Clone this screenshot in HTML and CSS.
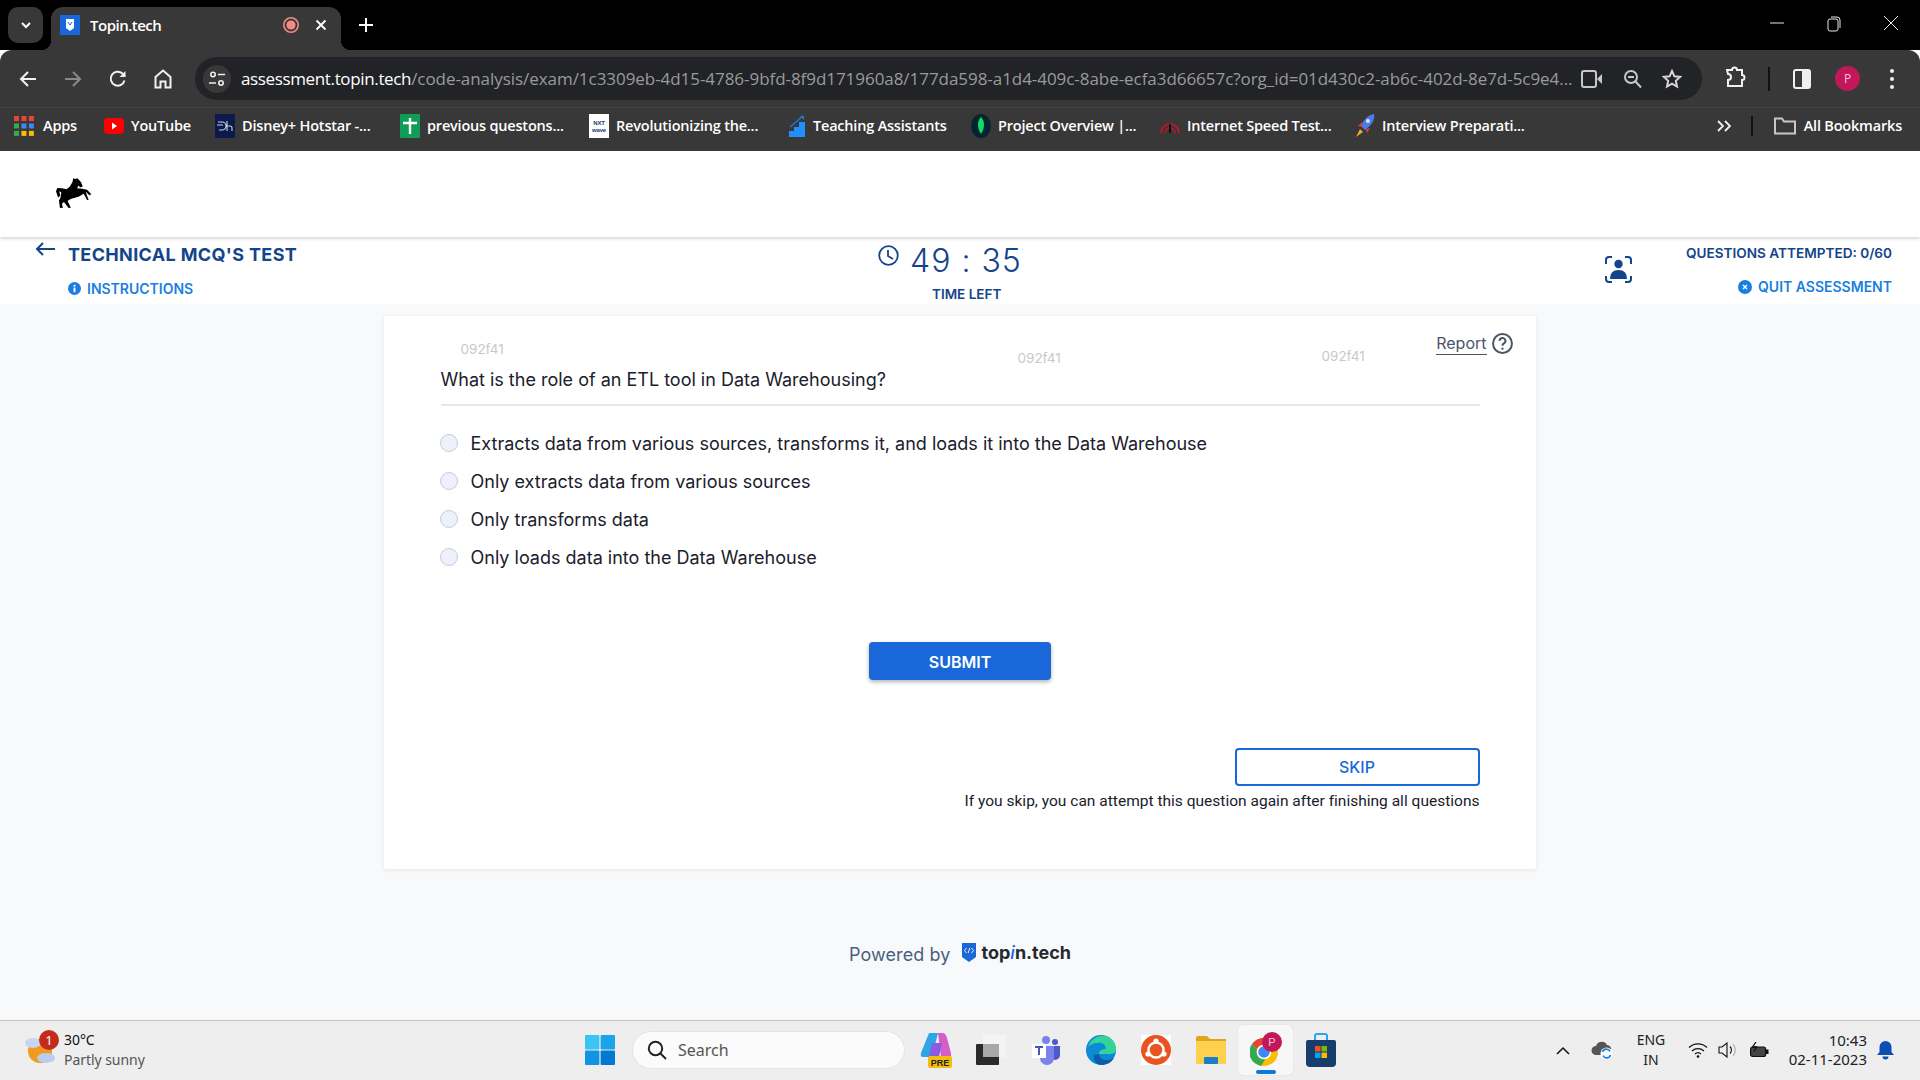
FILE: index.html
```html
<!DOCTYPE html>
<html lang="en">
<head>
    <meta charset="UTF-8">
    <meta name="viewport" content="width=device-width, initial-scale=1.0">
    <title>Topin.tech</title>
    <link rel="stylesheet" href="styles.css">
</head>
<body>
    <!-- browser chrome -->
    <div class="tab-strip">
        <div class="tab-search">
            <svg width="14" height="14" viewBox="0 0 14 14"><path d="M3 5l4 4 4-4" fill="none" stroke="#fff" stroke-width="2"/></svg>
        </div>
        <div class="tab">
            <svg class="tab-favicon" width="20" height="20" viewBox="0 0 20 20"><rect width="20" height="20" fill="#1967d8"/><path d="M6 4h8v9l-4 3-4-3z" fill="#fff"/><path d="M8 7l2 3 2-3" fill="none" stroke="#1967d8" stroke-width="1"/></svg>
            <span class="tab-title">Topin.tech</span>
            <svg class="tab-record" width="18" height="18" viewBox="0 0 18 18"><circle cx="9" cy="9" r="7.2" fill="none" stroke="#f28b82" stroke-width="1.6"/><circle cx="9" cy="9" r="4.6" fill="#f28b82"/></svg>
            <svg class="tab-close" width="12" height="12" viewBox="0 0 12 12"><path d="M1.5 1.5l9 9M10.5 1.5l-9 9" stroke="#fff" stroke-width="1.8"/></svg>
        </div>
        <svg class="tab-new" width="14" height="14" viewBox="0 0 14 14"><path d="M7 0v14M0 7h14" stroke="#fff" stroke-width="2"/></svg>
        <div class="window-controls">
            <div class="window-btn"><svg width="14" height="14" viewBox="0 0 14 14"><path d="M0 7h14" stroke="#e8e8e8" stroke-width="1"/></svg></div>
            <div class="window-btn"><svg width="14" height="16" viewBox="0 0 14 16"><rect x="1" y="3" width="10" height="12" rx="2" fill="none" stroke="#e8e8e8"/><path d="M4 1h6a3 3 0 0 1 3 3v8" fill="none" stroke="#e8e8e8"/></svg></div>
            <div class="window-btn"><svg width="14" height="14" viewBox="0 0 14 14"><path d="M0 0l14 14M14 0L0 14" stroke="#e8e8e8" stroke-width="1"/></svg></div>
        </div>
    </div>

    <div class="toolbar">
        <div class="tool-btn"><svg width="18" height="18" viewBox="0 0 18 18"><path d="M17 9H2M9 2L2 9l7 7" fill="none" stroke="#f1f1f1" stroke-width="2"/></svg></div>
        <div class="tool-btn"><svg width="18" height="18" viewBox="0 0 18 18"><path d="M1 9h15M9 2l7 7-7 7" fill="none" stroke="#8a8a8a" stroke-width="2"/></svg></div>
        <div class="tool-btn"><svg width="18" height="18" viewBox="0 0 18 18"><path d="M15.5 10.5A7 7 0 1 1 13.5 3.5L16 6" fill="none" stroke="#f1f1f1" stroke-width="2"/><path d="M16.5 1v6h-6z" fill="#f1f1f1"/></svg></div>
        <div class="tool-btn"><svg width="18" height="20" viewBox="0 0 18 20"><path d="M1.5 8L9 1.5 16.5 8v10.5h-5v-6h-5v6h-5z" fill="none" stroke="#f1f1f1" stroke-width="2"/></svg></div>

        <div class="omnibox">
            <div class="site-chip">
                <svg width="16" height="16" viewBox="0 0 16 16"><circle cx="4" cy="3.5" r="2.2" fill="none" stroke="#eee" stroke-width="1.6"/><path d="M9 3.5h7M0 12h7" stroke="#eee" stroke-width="1.6"/><circle cx="12" cy="12" r="2.2" fill="none" stroke="#eee" stroke-width="1.6"/></svg>
            </div>
            <div class="url"><span class="url-host">assessment.topin.tech</span>/code-analysis/exam/1c3309eb-4d15-4786-9bfd-8f9d171960a8/177da598-a1d4-409c-8abe-ecfa3d66657c?org_id=01d430c2-ab6c-402d-8e7d-5c9e4...</div>
            <div class="omni-btn"><svg width="22" height="18" viewBox="0 0 22 18"><rect x="1" y="1" width="14" height="16" rx="2" fill="none" stroke="#c7c7c7" stroke-width="2"/><path d="M16 9l5-5v10z" fill="#c7c7c7"/></svg></div>
            <div class="omni-btn"><svg width="19" height="20" viewBox="0 0 19 20"><circle cx="8" cy="8" r="6" fill="none" stroke="#c7c7c7" stroke-width="2"/><path d="M5 8h6M12.5 12.5l5.5 6" stroke="#c7c7c7" stroke-width="2"/></svg></div>
            <div class="omni-btn"><svg width="20" height="20" viewBox="0 0 20 20"><path d="M10 2l2.4 5.3 5.7.6-4.3 3.9 1.2 5.7-5-2.9-5 2.9 1.2-5.7L1.900 7.900l5.700-.6z" fill="none" stroke="#d5d5d5" stroke-width="2"/></svg></div>
        </div>

        <div class="puzzle-btn"><svg width="20" height="22" viewBox="0 0 20 22"><path d="M1 5h5a2.5 2.5 0 0 1 5 0h5v5a2.5 2.5 0 0 1 0 5v6H2v-6a3 3 0 0 0 0-6z" fill="none" stroke="#f1f1f1" stroke-width="2"/></svg></div>
        <div class="tool-sep"></div>
        <div class="panel-btn"><svg width="18" height="20" viewBox="0 0 18 20"><rect x="1" y="1" width="16" height="18" rx="2" fill="none" stroke="#f1f1f1" stroke-width="2"/><rect x="9" y="1" width="8" height="18" fill="#f1f1f1"/></svg></div>
        <div class="avatar">P</div>
        <div class="menu-dots"><span></span><span></span><span></span></div>
    </div>

    <div class="bookmarks">
        <div class="bookmark bookmark-apps">
            <svg width="20" height="20" viewBox="0 0 18 18"><rect width="4.5" height="4.5" fill="#ea4335"/><rect x="6.7" width="4.5" height="4.5" fill="#ea4335"/><rect x="13.4" width="4.5" height="4.5" fill="#ea4335"/><rect y="6.7" width="4.5" height="4.5" fill="#34a853"/><rect x="6.7" y="6.7" width="4.5" height="4.5" fill="#4285f4"/><rect x="13.4" y="6.7" width="4.5" height="4.5" fill="#4285f4"/><rect y="13.4" width="4.5" height="4.5" fill="#34a853"/><rect x="6.7" y="13.4" width="4.5" height="4.5" fill="#fbbc04"/><rect x="13.4" y="13.4" width="4.5" height="4.5" fill="#fbbc04"/></svg>
            <span>Apps</span>
        </div>
        <div class="bookmark">
            <svg width="20" height="16" viewBox="0 0 20 16"><rect width="20" height="16" rx="4" fill="#f00"/><path d="M8 4.5l5 3.500-5 3.500z" fill="#fff"/></svg>
            <span>YouTube</span>
        </div>
        <div class="bookmark">
            <svg width="20" height="24" viewBox="0 0 20 24"><rect width="20" height="24" fill="#0c1a4b"/><path d="M3 8h4a4 4 0 0 1 0 8H4M2 11h6M12 7v10M12 12h3q2 0 2 2v3" fill="none" stroke="#c9d2ee" stroke-width="1.1"/></svg>
            <span>Disney+ Hotstar -...</span>
        </div>
        <div class="bookmark">
            <svg width="20" height="24" viewBox="0 0 20 24"><rect width="20" height="24" rx="1" fill="#0f9d58"/><path d="M10 4v16M3 9h14" stroke="#fff" stroke-width="2.4"/></svg>
            <span>previous questons...</span>
        </div>
        <div class="bookmark">
            <svg width="20" height="24" viewBox="0 0 20 24"><rect width="20" height="24" fill="#fff"/><text class="nxt-label" x="10" y="11" text-anchor="middle">NXT</text><text class="nxt-label" x="10" y="18" text-anchor="middle">wave</text></svg>
            <span>Revolutionizing the...</span>
        </div>
        <div class="bookmark">
            <svg width="18" height="22" viewBox="0 0 18 22"><path d="M2 12L15 1" stroke="#1a7fd8" stroke-width="1.4"/><path d="M12 1h4v4z" fill="#1a7fd8"/><path d="M1 22v-6h5v-4h5V7h6v15z" fill="#1e90ff"/></svg>
            <span>Teaching Assistants</span>
        </div>
        <div class="bookmark">
            <svg width="20" height="24" viewBox="0 0 20 24"><ellipse cx="10" cy="12" rx="10" ry="12" fill="#04252e"/><path d="M10 3c4 4 4 11 0 17-4-6-4-13 0-17z" fill="#13d96b"/></svg>
            <span>Project Overview |...</span>
        </div>
        <div class="bookmark">
            <svg width="20" height="16" viewBox="0 0 20 16"><path d="M1 15a9 9 0 0 1 18 0" fill="none" stroke="#c8102e" stroke-width="2"/><path d="M5 15a5 5 0 0 1 10 0" fill="none" stroke="#c8102e" stroke-width="1.6"/><path d="M9 15V6h2v9z" fill="#111"/></svg>
            <span>Internet Speed Test...</span>
        </div>
        <div class="bookmark">
            <svg width="20" height="24" viewBox="0 0 20 24"><path d="M19 0c1 6-2 11-9 16l-4-4C9 5 13 1 19 0z" fill="#4a7bea"/><circle cx="13" cy="7" r="2" fill="#dbe6ff"/><path d="M7 13l-4-1 4-4zM11 15l1 4 3-5z" fill="#d8432f"/><path d="M5 15l3 3-7 5z" fill="#f5a623"/></svg>
            <span>Interview Preparati...</span>
        </div>
        <div class="bookmarks-right">
            <svg class="more-icon" width="14" height="12" viewBox="0 0 14 12"><path d="M1 1l5 5-5 5M8 1l5 5-5 5" fill="none" stroke="#f1f1f1" stroke-width="1.8"/></svg>
            <div class="bookmarks-sep"></div>
            <svg width="22" height="18" viewBox="0 0 22 18"><path d="M1 16.5V1.5h7l2 3h11v12z" fill="none" stroke="#c7c7c7" stroke-width="2"/></svg>
            <span>All Bookmarks</span>
        </div>
    </div>

    <!-- page -->
    <div class="page">
        <div class="logo-bar">
            <svg class="logo" width="38" height="32" viewBox="165 80 115 95"><path d="M220 83L226 85 233 83 244 95 249 108 241 111 236 105 232 113 248 115 262 118 275 131 269 134 258 124 262 136 267 148 262 149 252 130 236 139 212 146 203 152 213 172 206 173 192 155 186 160 189 172 180 173 177 150 182 140 184 125 178 122 181 136 174 141 168 122 172 112 186 113 200 116 210 108 218 94z" fill="#000"/></svg>
        </div>

        <header class="test-header">
            <div class="test-info">
                <svg class="back-arrow" width="20" height="14" viewBox="0 0 20 14"><path d="M20 7H2M8 1L2 7l6 6" fill="none" stroke="#14448a" stroke-width="2"/></svg>
                <div>
                    <h1 class="test-title">TECHNICAL MCQ'S TEST</h1>
                    <a class="header-link instructions-link">
                        <svg width="13" height="13" viewBox="0 0 14 14"><circle cx="7" cy="7" r="7" fill="#1a7fe0"/><rect x="6" y="6" width="2" height="5" fill="#fff"/><rect x="6" y="3" width="2" height="2" fill="#fff"/></svg>
                        INSTRUCTIONS
                    </a>
                </div>
            </div>
            <div class="timer">
                <div class="timer-row">
                    <svg class="timer-icon" width="21" height="21" viewBox="0 0 21 21"><circle cx="10.5" cy="10.5" r="9.3" fill="none" stroke="#14448a" stroke-width="1.8"/><path d="M10 5v6l5 3" fill="none" stroke="#14448a" stroke-width="1.8"/></svg>
                    <span class="timer-value">49 : 35</span>
                </div>
                <div class="timer-label">TIME LEFT</div>
            </div>
            <div class="test-status">
                <svg class="proctor-icon" width="27" height="27" viewBox="0 0 27 27"><path d="M1 8V4a3 3 0 0 1 3-3h3M20 1h3a3 3 0 0 1 3 3v4M1 20v3a3 3 0 0 0 3 3h3M20 26h3a3 3 0 0 0 3-3v-3" fill="none" stroke="#14448a" stroke-width="2"/><circle cx="13.5" cy="8" r="4.2" fill="#14448a"/><path d="M5 23q0-9 8.5-9T22 23z" fill="#14448a"/></svg>
                <div class="status-text">
                    <div class="attempted">QUESTIONS ATTEMPTED: 0/60</div>
                    <a class="header-link quit-link">
                        <svg width="14" height="14" viewBox="0 0 14 14"><circle cx="7" cy="7" r="7" fill="#1a7fe0"/><path d="M5 5l4 4M9 5L5 9" stroke="#fff" stroke-width="1.4"/></svg>
                        QUIT ASSESSMENT
                    </a>
                </div>
            </div>
        </header>

        <main class="content">
            <section class="question-card">
                <span class="watermark watermark-one">092f41</span>
                <span class="watermark watermark-two">092f41</span>
                <span class="watermark watermark-three">092f41</span>
                <div class="report">
                    <span class="report-text">Report</span>
                    <svg width="21" height="21" viewBox="0 0 20 20"><circle cx="10" cy="10" r="9" fill="none" stroke="#4a5568" stroke-width="1.9"/><path d="M7.2 7.5a2.8 2.8 0 1 1 4.2 2.4c-.9.5-1.4 1.1-1.4 2.3" fill="none" stroke="#4a5568" stroke-width="1.9"/><circle cx="10" cy="15" r="1.1" fill="#4a5568"/></svg>
                </div>

                <p class="question">What is the role of an ETL tool in Data Warehousing?</p>

                <div class="options">
                    <label class="option"><span class="radio"></span>Extracts data from various sources, transforms it, and loads it into the Data Warehouse</label>
                    <label class="option"><span class="radio"></span>Only extracts data from various sources</label>
                    <label class="option"><span class="radio"></span>Only transforms data</label>
                    <label class="option"><span class="radio"></span>Only loads data into the Data Warehouse</label>
                </div>

                <button class="submit-btn">SUBMIT</button>

                <div class="skip-area">
                    <button class="skip-btn">SKIP</button>
                    <p class="skip-note">If you skip, you can attempt this question again after finishing all questions</p>
                </div>
            </section>

            <footer class="powered">
                <span class="powered-text">Powered by</span>
                <svg class="powered-logo" width="14" height="19" viewBox="0 0 14 19"><path d="M0 0h14v14l-7 5-7-5z" fill="#1967d8"/><path d="M4.5 5L2.5 7.5l2 2.5M9.5 5l2 2.5-2 2.5M7.8 5L6.2 10" fill="none" stroke="#fff" stroke-width=".9"/></svg>
                <span class="powered-brand">top<i>i</i>n.tech</span>
            </footer>
        </main>
    </div>

    <!-- windows taskbar -->
    <div class="taskbar">
        <div class="weather">
            <div class="weather-icon">
                <svg width="30" height="36" viewBox="0 0 30 36"><circle cx="15" cy="20" r="12" fill="#f09a1f"/><ellipse cx="8" cy="12" rx="8" ry="5" fill="#c7d6f2"/><ellipse cx="21" cy="27" rx="9" ry="5" fill="#b9cdf0"/></svg>
                <span class="weather-badge">1</span>
            </div>
            <div class="weather-text">
                <div class="weather-temp">30°C</div>
                <div class="weather-desc">Partly sunny</div>
            </div>
        </div>

        <svg class="start-icon" width="30" height="30" viewBox="0 0 30 30"><rect width="14.4" height="14.4" rx="1" fill="#3cc4f5"/><rect x="15.6" width="14.4" height="14.4" rx="1" fill="#1ba3ec"/><rect y="15.6" width="14.4" height="14.4" rx="1" fill="#1393e4"/><rect x="15.6" y="15.6" width="14.4" height="14.4" rx="1" fill="#0278d4"/></svg>

        <div class="task-search">
            <svg width="20" height="20" viewBox="0 0 20 20"><circle cx="8.5" cy="8.5" r="6.7" fill="none" stroke="#222" stroke-width="2"/><path d="M13 13l6 6" stroke="#222" stroke-width="2"/></svg>
            <span>Search</span>
        </div>

        <div class="task-icons">
            <div class="task-icon">
                <svg width="32" height="38" viewBox="0 0 32 38"><path d="M9 2h9l-6 24H3q-3 0-2-4z" fill="#2ea6e6"/><path d="M18 2h4q4 0 5 5l4 15q1 4-3 4h-7z" fill="#d55ec8"/><path d="M12 12h10l-3 14H9z" fill="#8c5ce0"/><rect x="8" y="25" width="24" height="12" rx="2" fill="#f5bd0c"/><text class="pre-label" x="20" y="35" text-anchor="middle">PRE</text></svg>
            </div>
            <div class="task-icon">
                <svg width="30" height="30" viewBox="0 0 30 30"><rect y="9" width="23" height="21" rx="1" fill="#2a2a2a"/><rect x="7" y="0" width="23" height="22" rx="1" fill="#f4f4f4"/><rect x="7" y="9" width="16" height="13" fill="#a8a8a8"/></svg>
            </div>
            <div class="task-icon">
                <svg width="28" height="30" viewBox="0 0 28 30"><circle cx="14" cy="5" r="4" fill="#7b83eb"/><circle cx="23" cy="7" r="3" fill="#5059c9"/><path d="M18 11h10v9a5 5 0 0 1-10 0z" fill="#5059c9"/><path d="M8 11h14v12a7 7 0 0 1-14 0z" fill="#7b83eb"/><rect y="9" width="14" height="14" fill="#fff"/><path d="M3 12h8M7 12v8" stroke="#4b53bc" stroke-width="2"/></svg>
            </div>
            <div class="task-icon">
                <svg width="30" height="30" viewBox="0 0 30 30"><circle cx="15" cy="15" r="15" fill="#0c8ad6"/><path d="M2 12C5 3 13 0 19 1c7 1 11 7 11 13 0 4-3 5-6 5H13c0-4 4-5 7-5 0-4-4-7-8-6-5 0-8 2-10 4z" fill="#35d39a"/><path d="M13 19c1 6 8 8 15 4-3 5-8 7-12 7-6 0-9-5-8-10z" fill="#0a5ea8"/></svg>
            </div>
            <div class="task-icon">
                <svg width="30" height="30" viewBox="0 0 30 30"><rect width="30" height="30" fill="#fff"/><circle cx="15" cy="15" r="15" fill="#e95420"/><circle cx="15" cy="15" r="7.5" fill="none" stroke="#fff" stroke-width="2.4"/><circle cx="15" cy="6" r="2.6" fill="#fff"/><circle cx="7" cy="19" r="2.6" fill="#fff"/><circle cx="23" cy="19" r="2.6" fill="#fff"/></svg>
            </div>
            <div class="task-icon">
                <svg width="30" height="28" viewBox="0 0 30 28"><path d="M0 2q0-2 2-2h9l3 3h16v25H0z" fill="#e3a31b"/><rect y="5" width="30" height="23" rx="1" fill="#fdd04e"/><rect x="8" y="21" width="14" height="7" rx="1" fill="#1a7fc8"/></svg>
            </div>
            <div class="task-icon task-icon-active">
                <svg width="32" height="36" viewBox="0 0 32 36"><circle cx="14" cy="20" r="14" fill="#fbbc04"/><path d="M14 6a14 14 0 0 1 12 7H14a7 7 0 0 0-7 4L2 12a14 14 0 0 1 12-6z" fill="#ea4335"/><path d="M2 12a14 14 0 0 0 9 22l5-8a7 7 0 0 1-9-9z" fill="#34a853"/><circle cx="14" cy="20" r="6.5" fill="#4285f4" stroke="#fff" stroke-width="1.5"/><circle cx="22" cy="10" r="10" fill="#c2185b"/><text class="chrome-label" x="22" y="14" text-anchor="middle">P</text></svg>
                <span class="active-bar"></span>
            </div>
            <div class="task-icon">
                <svg width="30" height="34" viewBox="0 0 30 34"><path d="M9 8V3q0-2 2-2h8q2 0 2 2v5" fill="none" stroke="#2aa5e8" stroke-width="2"/><path d="M2 7h26q2 0 2 2v21q0 4-4 4H4q-4 0-4-4V9q0-2 2-2z" fill="#173d6e"/><rect x="9" y="13" width="5.5" height="5.5" fill="#f25022"/><rect x="15.5" y="13" width="5.5" height="5.5" fill="#7fba00"/><rect x="9" y="19.5" width="5.5" height="5.5" fill="#00a4ef"/><rect x="15.5" y="19.5" width="5.5" height="5.5" fill="#ffb900"/></svg>
            </div>
        </div>

        <div class="tray">
            <svg class="tray-chevron" width="14" height="9" viewBox="0 0 14 9"><path d="M1 8l6-6 6 6" fill="none" stroke="#111" stroke-width="1.5"/></svg>
            <svg class="tray-cloud" width="22" height="20" viewBox="0 0 22 20"><path d="M5 15a4.5 4.5 0 0 1 0-9 6 6 0 0 1 11-1 4 4 0 0 1 4 5H13v5z" fill="#555"/><circle cx="15.5" cy="13.5" r="6" fill="#fff"/><path d="M11.5 12a4 4 0 0 1 7.5-.5M19.5 15a4 4 0 0 1-7.5.5" fill="none" stroke="#1a7fe0" stroke-width="1.6"/></svg>
            <div class="tray-lang"><div>ENG</div><div>IN</div></div>
            <svg class="tray-wifi" width="20" height="16" viewBox="0 0 20 16"><path d="M1 5.5a13 13 0 0 1 18 0M4 9a9 9 0 0 1 12 0M7 12a4.5 4.5 0 0 1 6 0" fill="none" stroke="#111" stroke-width="1.2"/><circle cx="10" cy="14.5" r="1.3" fill="#111"/></svg>
            <svg class="tray-volume" width="20" height="16" viewBox="0 0 20 16"><path d="M1 5h3l5-4v14l-5-4H1z" fill="none" stroke="#111" stroke-width="1.1"/><path d="M12 4.500a5 5 0 0 1 0 7" fill="none" stroke="#111" stroke-width="1.1"/><path d="M15 2a9 9 0 0 1 0 12" fill="none" stroke="#aaa" stroke-width="1.1"/></svg>
            <svg class="tray-battery" width="20" height="16" viewBox="0 0 20 16"><rect x="1.6" y="5" width="15" height="9.5" rx="2" fill="#444" stroke="#111" stroke-width="1.2"/><rect x="17" y="7.5" width="2.5" height="4.5" fill="#111"/><path d="M7 0L3.5 5h4L5 9.5" fill="none" stroke="#111" stroke-width="1.3"/></svg>
            <div class="tray-clock"><div>10:43</div><div>02-11-2023</div></div>
            <svg class="tray-bell" width="17" height="19" viewBox="0 0 17 19"><path d="M8.5 0a6 6 0 0 1 6 6v5l2.5 3H0l2.5-3V6a6 6 0 0 1 6-6z" fill="#0b4fb3"/><path d="M5.5 15.5h6a3 3 0 0 1-6 0z" fill="#0b4fb3"/></svg>
        </div>
    </div>
</body>
</html>
```

FILE: styles.css
```css
:root {
    --chrome-bg: #383838;
    --navy: #14448a;
    --link-blue: #1a7fe0;
    --btn-blue: #1967d8;
    --chrome-font: "Open Sans", "Noto Sans", sans-serif;
    --page-font: Inter, "Liberation Sans", sans-serif;
}

* {
    margin: 0;
    padding: 0;
    box-sizing: border-box;
}

body {
    display: flex;
    flex-direction: column;
    height: 1080px;
    overflow: hidden;
    font-family: var(--page-font);
    background: #f8f9fb;
}

/* tab strip */
.tab-strip {
    display: flex;
    align-items: flex-start;
    height: 50px;
    flex: none;
    background: #000;
    padding: 7px 0 0 8px;
    color: #fff;
    font-family: var(--chrome-font);
}

.tab-search {
    display: flex;
    align-items: center;
    justify-content: center;
    width: 35px;
    height: 36px;
    background: var(--chrome-bg);
    border-radius: 10px;
}

.tab {
    position: relative;
    display: flex;
    align-items: center;
    width: 290px;
    height: 43px;
    margin-left: 8px;
    padding: 0 14px 7px 9px;
    background: var(--chrome-bg);
    border-radius: 12px 12px 0 0;
}

.tab::before,
.tab::after {
    content: '';
    position: absolute;
    bottom: 0;
    width: 10px;
    height: 10px;
}

.tab::before {
    left: -10px;
    background: radial-gradient(circle at 0 0, #000 10px, var(--chrome-bg) 10.5px);
}

.tab::after {
    right: -10px;
    background: radial-gradient(circle at 100% 0, #000 10px, var(--chrome-bg) 10.5px);
}

.tab-title {
    margin-left: 10px;
    font-size: 15px;
    font-weight: 600;
    letter-spacing: -0.5px;
    flex: 1;
}

.tab-close {
    margin-left: 15px;
}

.tab-new {
    margin: 11px 0 0 18px;
}

.window-controls {
    display: flex;
    margin: 9px 1px 0 auto;
}

.window-btn {
    display: flex;
    justify-content: center;
    width: 57px;
}

/* toolbar */
.toolbar {
    display: flex;
    align-items: center;
    flex: none;
    height: 57px;
    padding: 0 0 0 5px;
    background: var(--chrome-bg);
    border-radius: 12px 12px 0 0;
    font-family: var(--chrome-font);
}

.tool-btn {
    display: flex;
    justify-content: center;
    width: 45px;
}

.omnibox {
    display: flex;
    align-items: center;
    width: 1507px;
    height: 43px;
    margin-left: 10px;
    padding: 0 10px 0 8px;
    background: #222327;
    border-radius: 22px;
}

.site-chip {
    display: flex;
    align-items: center;
    justify-content: center;
    flex: none;
    width: 28px;
    height: 28px;
    background: var(--chrome-bg);
    border-radius: 50%;
}

.url {
    flex: 1;
    margin-left: 10px;
    font-size: 17px;
    letter-spacing: -0.05px;
    white-space: nowrap;
    overflow: hidden;
    color: #9a9a9a;
}

.url-host {
    color: #fff;
    letter-spacing: -0.36px;
}

.omni-btn {
    display: flex;
    justify-content: center;
    flex: none;
    width: 40px;
}

.puzzle-btn {
    margin-left: 24px;
}

.tool-sep {
    width: 2px;
    height: 24px;
    margin: 0 23px 0 22px;
    background: #111;
}

.panel-btn {
    display: flex;
}

.avatar {
    display: flex;
    align-items: center;
    justify-content: center;
    width: 25px;
    height: 25px;
    margin-left: 24px;
    border-radius: 50%;
    background: #c2185b;
    color: #f4c6d8;
    font-size: 12px;
}

.menu-dots {
    display: flex;
    flex-direction: column;
    gap: 4px;
    margin-left: 30px;
}

.menu-dots span {
    width: 4px;
    height: 4px;
    border-radius: 50%;
    background: #f1f1f1;
}

/* bookmarks bar */
.bookmarks {
    display: grid;
    grid-template-columns: 90px 111px 185px 189px 199px 183px 189px 195px 340px 1fr;
    align-items: center;
    flex: none;
    height: 44px;
    padding: 0 18px 8px 14px;
    background: var(--chrome-bg);
    border-top: 1px solid #404040;
    color: #fff;
    font-family: var(--chrome-font);
    font-size: 14.5px;
    font-weight: 600;
    letter-spacing: -0.2px;
    white-space: nowrap;
}

.bookmark {
    display: flex;
    align-items: center;
    gap: 7px;
}

.bookmark-apps {
    gap: 9px;
}

.nxt-label {
    font-family: "Liberation Sans", sans-serif;
    font-size: 6px;
    font-weight: 700;
    fill: #1b3a6b;
}

.bookmarks-right {
    display: flex;
    align-items: center;
    justify-content: flex-end;
    gap: 8px;
}

.more-icon {
    margin-right: 12px;
}

.bookmarks-sep {
    width: 2px;
    height: 20px;
    margin-right: 13px;
    background: #111;
}

/* page */
.page {
    flex: 1;
    display: flex;
    flex-direction: column;
    min-height: 0;
}

.logo-bar {
    display: flex;
    align-items: center;
    flex: none;
    height: 86px;
    padding: 0 0 3px 55px;
    background: #fff;
    box-shadow: 0 2px 3px rgba(0, 0, 0, 0.15);
    position: relative;
}

.test-header {
    display: flex;
    flex: none;
    height: 67px;
    padding-right: 28px;
    background: #fff;
    color: var(--navy);
}

.test-info {
    display: flex;
    width: 878px;
    padding: 5px 0 0 35px;
}

.back-arrow {
    margin-right: 13px;
}

.test-title {
    font-size: 18px;
    font-weight: 700;
    line-height: 22px;
    margin-top: 2px;
    letter-spacing: 0.35px;
    white-space: nowrap;
}

.header-link {
    display: flex;
    align-items: center;
    gap: 6px;
    font-size: 14px;
    font-weight: 600;
    color: var(--link-blue);
    white-space: nowrap;
}

.instructions-link {
    margin-top: 14px;
}

.timer {
    width: 360px;
}

.timer-row {
    display: flex;
}

.timer-icon {
    margin-top: 8px;
    flex: none;
}

.timer-value {
    margin: 5px 0 0 11px;
    font-size: 32px;
    font-weight: 300;
    line-height: 38px;
    letter-spacing: 1px;
    white-space: nowrap;
}

.timer-label {
    margin: 5px 0 0 54px;
    font-size: 13.5px;
    font-weight: 600;
    line-height: 18px;
}

.test-status {
    flex: 1;
    display: flex;
}

.proctor-icon {
    margin: 19px 0 0 367px;
    flex: none;
}

.status-text {
    flex: 1;
    display: flex;
    flex-direction: column;
    align-items: flex-end;
    padding-top: 7px;
}

.attempted {
    font-size: 13.6px;
    font-weight: 600;
    line-height: 18px;
    white-space: nowrap;
}

.quit-link {
    margin-top: 16px;
}

/* question card */
.content {
    flex: 1;
    display: flex;
    flex-direction: column;
    align-items: center;
    padding-top: 12px;
    min-height: 0;
}

.question-card {
    position: relative;
    width: 1152px;
    height: 553px;
    padding: 51px 56px 0 57px;
    margin-left: -1px;
    background: #fff;
    box-shadow: 0 1px 4px rgba(0, 0, 0, 0.08);
}

.watermark {
    position: absolute;
    font-size: 13.5px;
    color: #c9c9c9;
}

.watermark-one {
    left: 77px;
    top: 25px;
}

.watermark-two {
    left: 634px;
    top: 34px;
}

.watermark-three {
    left: 938px;
    top: 32px;
}

.report {
    position: absolute;
    top: 16px;
    right: 23px;
    display: flex;
    align-items: center;
    gap: 5px;
    color: #4a5568;
    font-size: 16px;
}

.report-text {
    line-height: 22px;
    border-bottom: 1px solid #4a5568;
}

.question {
    height: 39px;
    font-size: 18px;
    line-height: 26px;
    color: #1a202c;
    border-bottom: 2px solid #e2e8f0;
}

.options {
    margin-top: 18px;
}

.option {
    display: flex;
    align-items: center;
    gap: 12px;
    height: 38px;
    font-size: 18px;
    color: #1a202c;
    white-space: nowrap;
}

.radio {
    width: 18px;
    height: 18px;
    flex: none;
    margin-left: -1px;
    margin-right: 1px;
    border: 1px solid #c5cbd8;
    border-radius: 50%;
    background: #eef1fb;
}

.submit-btn {
    display: block;
    width: 182px;
    height: 38px;
    margin: 66px auto 0;
    padding-top: 1px;
    border: none;
    border-radius: 4px;
    background: var(--btn-blue);
    box-shadow: 0 2px 4px rgba(0, 0, 0, 0.3);
    color: #fff;
    font-family: var(--page-font);
    font-size: 16px;
    font-weight: 600;
}

.skip-area {
    display: flex;
    flex-direction: column;
    align-items: flex-end;
    margin-top: 68px;
}

.skip-btn {
    width: 245px;
    height: 38px;
    border: 2px solid var(--btn-blue);
    border-radius: 4px;
    background: #fff;
    color: var(--btn-blue);
    font-family: var(--page-font);
    font-size: 16px;
    font-weight: 500;
}

.skip-note {
    margin-top: 5px;
    font-family: Roboto, sans-serif;
    font-size: 15.5px;
    letter-spacing: 0.015px;
    line-height: 20px;
    color: #1a202c;
    white-space: nowrap;
}

.powered {
    display: flex;
    align-items: center;
    margin-top: 70px;
    color: #4a5f7f;
}

.powered-text {
    margin-top: 5px;
    font-size: 18px;
    letter-spacing: 0.1px;
}

.powered-logo {
    margin-left: 11px;
}

.powered-brand {
    margin-left: 6px;
    font-size: 18px;
    font-weight: 700;
    color: #24292f;
}

.powered-brand i {
    color: var(--btn-blue);
    font-weight: 500;
}

/* taskbar */
.taskbar {
    display: flex;
    align-items: center;
    flex: none;
    height: 60px;
    padding-bottom: 1px;
    background: #eeeeee;
    border-top: 1px solid #c4c4c4;
    font-family: "Noto Sans", sans-serif;
}

.weather {
    display: flex;
    align-items: center;
    flex: none;
    width: 585px;
    padding-left: 25px;
}

.weather-icon {
    position: relative;
    width: 30px;
    height: 38px;
}

.weather-badge {
    position: absolute;
    top: -1px;
    left: 14px;
    width: 20px;
    height: 20px;
    border-radius: 50%;
    background: #c42b1c;
    color: #fff;
    font-size: 13px;
    line-height: 20px;
    text-align: center;
}

.weather-text {
    margin-left: 9px;
    font-size: 14px;
    line-height: 20px;
    letter-spacing: -0.05px;
}

.weather-temp {
    color: #111;
}

.weather-desc {
    color: #555;
}

.start-icon {
    flex: none;
}

.task-search {
    display: flex;
    align-items: center;
    gap: 11px;
    width: 273px;
    height: 38px;
    margin-left: 17px;
    padding-left: 14px;
    background: #fbfbfb;
    border: 1px solid #e4e4e4;
    border-radius: 19px;
    color: #555;
    font-size: 16px;
}

.task-icons {
    display: flex;
    margin-left: 3px;
    margin-right: 1px;
}

.task-icon {
    position: relative;
    display: flex;
    align-items: center;
    justify-content: center;
    width: 55px;
    height: 50px;
}

.task-icon-active {
    background: #f7f7f7;
    border-radius: 5px;
    box-shadow: 0 0 1px rgba(0, 0, 0, 0.2);
}

.active-bar {
    position: absolute;
    bottom: 1px;
    left: 18px;
    width: 20px;
    height: 4px;
    border-radius: 2px;
    background: #0a7cd6;
}

.pre-label {
    font-family: "Liberation Sans", sans-serif;
    font-size: 9px;
    font-weight: 700;
    fill: #222;
}

.chrome-label {
    font-family: "Liberation Sans", sans-serif;
    font-size: 11px;
    fill: #f4c6d8;
}

.tray {
    flex: 1;
    display: flex;
    align-items: center;
    padding-left: 207px;
    color: #222;
    font-size: 14px;
}

.tray-cloud {
    margin-left: 21px;
}

.tray-lang {
    width: 50px;
    margin-left: 13px;
    text-align: center;
    line-height: 20px;
}

.tray-wifi {
    margin-left: 12px;
}

.tray-volume {
    margin-left: 10px;
}

.tray-battery {
    margin-left: 11px;
}

.tray-clock {
    width: 98px;
    font-size: 15px;
    text-align: right;
    line-height: 19px;
}

.tray-bell {
    margin-left: 10px;
}
```
